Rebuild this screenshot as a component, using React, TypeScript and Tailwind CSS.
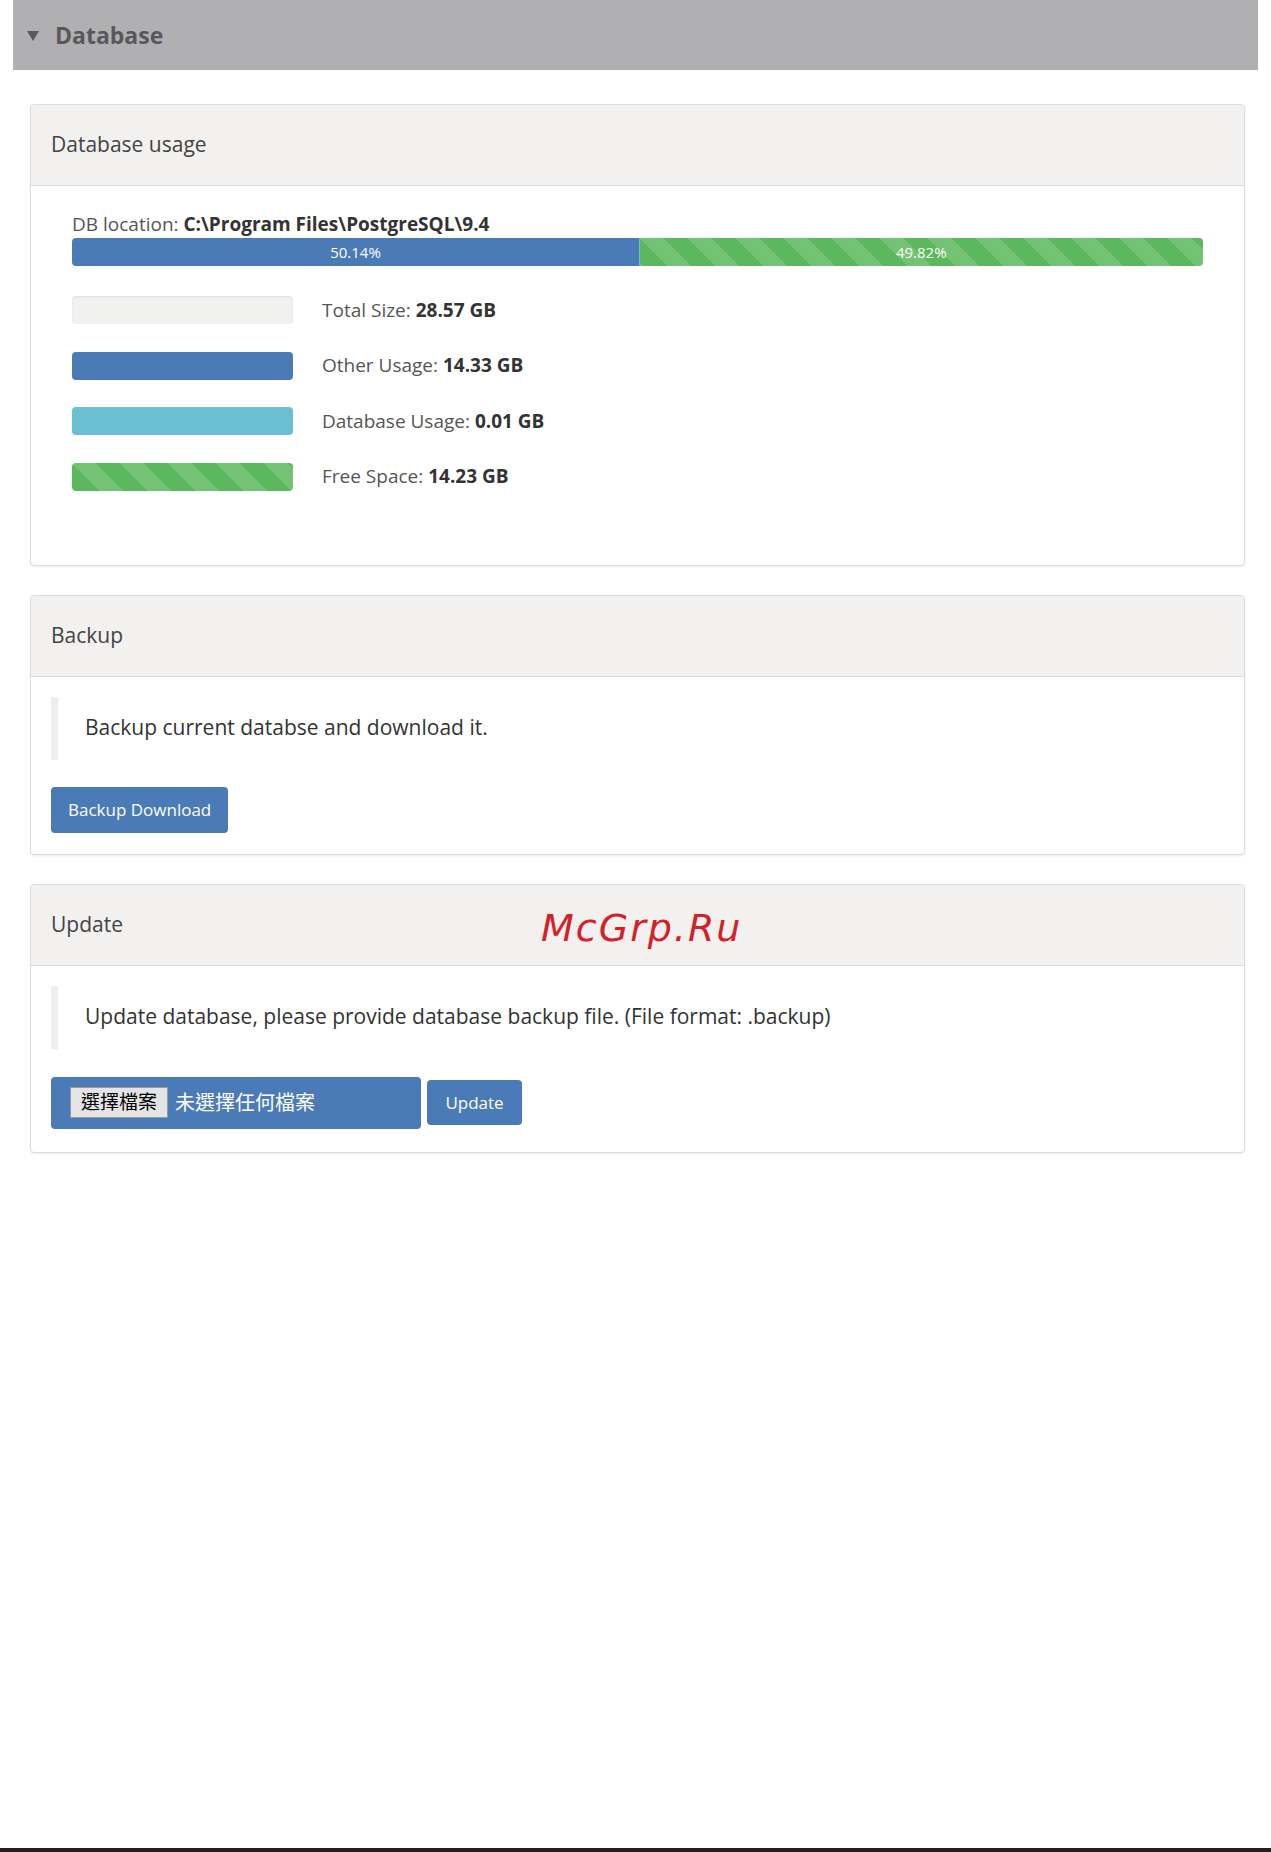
import React from 'react'

const stripes =
  'bg-[linear-gradient(45deg,rgba(255,255,255,.15)_25%,transparent_25%,transparent_50%,rgba(255,255,255,.15)_50%,rgba(255,255,255,.15)_75%,transparent_75%,transparent)] bg-size-[48px_48px]'

function Panel({
  title,
  children,
  extra,
  bodyClass,
}: {
  title: string
  children: React.ReactNode
  extra?: React.ReactNode
  bodyClass: string
}) {
  return (
    <div className="rounded-[4px] border border-[#dcdcdc] bg-white shadow-[0_1px_2px_rgba(0,0,0,0.08)]">
      <div className="relative flex h-[81px] items-center rounded-t-[4px] border-b border-[#dcdcdc] bg-[#f2f1f0] px-[20px]">
        <h3 className="text-[21px] text-[#444]">{title}</h3>
        {extra}
      </div>
      <div className={bodyClass}>{children}</div>
    </div>
  )
}

function Note({ children }: { children: React.ReactNode }) {
  return (
    <div className="flex h-[63px] items-center border-l-[7px] border-[#eeeeee] pl-[27px] text-[21px] text-[#333]">
      {children}
    </div>
  )
}

function Legend({ bar, label, value }: { bar: string; label: string; value: string }) {
  return (
    <div className="flex h-[28px] items-center gap-[29px]">
      <div className={`h-[28px] w-[221px] rounded-[4px] ${bar}`} />
      <span className="text-[19px] text-[#555]">
        {label}: <b className="font-bold text-[#333]">{value}</b>
      </span>
    </div>
  )
}

export default function App() {
  return (
    <div className="flex min-h-[1852px] flex-col bg-white font-['Open_Sans','Noto_Sans_CJK_TC',sans-serif]">
      <div className="mx-[13px] flex h-[70px] items-center bg-[#b0b0b2] pl-[13px]">
        <svg width="14" height="12" viewBox="0 0 14 12" className="mt-[2px]">
          <polygon points="1,1 13,1 7,11" fill="#5a5a5c" />
        </svg>
        <span className="ml-[15px] text-[23px] font-bold text-[#58585a]">Database</span>
      </div>

      <div className="ml-[30px] mr-[26px] mt-[34px] flex flex-col gap-[29px]">
        <Panel title="Database usage" bodyClass="px-[41px] pt-[24px] pb-[74px]">
          <div className="text-[19px] leading-[28px] text-[#555]">
            DB location: <b className="font-bold text-[#333]">C:\Program Files\PostgreSQL\9.4</b>
          </div>
          <div className="flex h-[28px] overflow-hidden rounded-[4px] bg-[#f5f5f5] text-[15px] leading-[28px] text-white">
            <div className="w-[50.14%] bg-[#4a7bb6] text-center">50.14%</div>
            <div className="w-[0.04%] bg-[#6ac0d2]" />
            <div className={`w-[49.82%] bg-[#5cb85c] text-center ${stripes}`}>49.82%</div>
          </div>
          <div className="mt-[30px] flex flex-col gap-[27.5px]">
            <Legend bar="bg-[#f1f1f0] shadow-[inset_0_1px_2px_rgba(0,0,0,0.08)]" label="Total Size" value="28.57 GB" />
            <Legend bar="bg-[#4a7bb6]" label="Other Usage" value="14.33 GB" />
            <Legend bar="bg-[#6ac0d2]" label="Database Usage" value="0.01 GB" />
            <Legend bar={`bg-[#5cb85c] ${stripes}`} label="Free Space" value="14.23 GB" />
          </div>
        </Panel>

        <Panel title="Backup" bodyClass="px-[20px] pt-[20px] pb-[21px]">
          <Note>Backup current databse and download it.</Note>
          <button className="mt-[27px] h-[46px] rounded-[4px] bg-[#4a7bb6] px-[17px] text-[17px] text-white">
            Backup Download
          </button>
        </Panel>

        <Panel
          title="Update"
          bodyClass="px-[20px] pt-[20px] pb-[23px]"
          extra={
            <span className="absolute left-[510px] top-[15px] font-['DejaVu_Sans',sans-serif] text-[38px] italic tracking-[2px] text-[#d62027]">
              McGrp.Ru
            </span>
          }
        >
          <Note>Update database, please provide database backup file. (File format: .backup)</Note>
          <div className="mt-[28px] flex items-center gap-[6px]">
            <div className="flex h-[52px] w-[370px] items-center rounded-[4px] bg-[#4a7bb6] pl-[19px]">
              <span className="flex h-[31px] w-[98px] items-center justify-center border border-[#9a9a9a] bg-[#e4e4e4] text-[19px] text-black">
                選擇檔案
              </span>
              <span className="ml-[7px] text-[20px] text-white">未選擇任何檔案</span>
            </div>
            <button className="h-[45px] w-[95px] rounded-[4px] bg-[#4a7bb6] text-[17px] text-white">Update</button>
          </div>
        </Panel>
      </div>

      <div className="mt-auto h-[4px] bg-[#231f20]" />
    </div>
  )
}
